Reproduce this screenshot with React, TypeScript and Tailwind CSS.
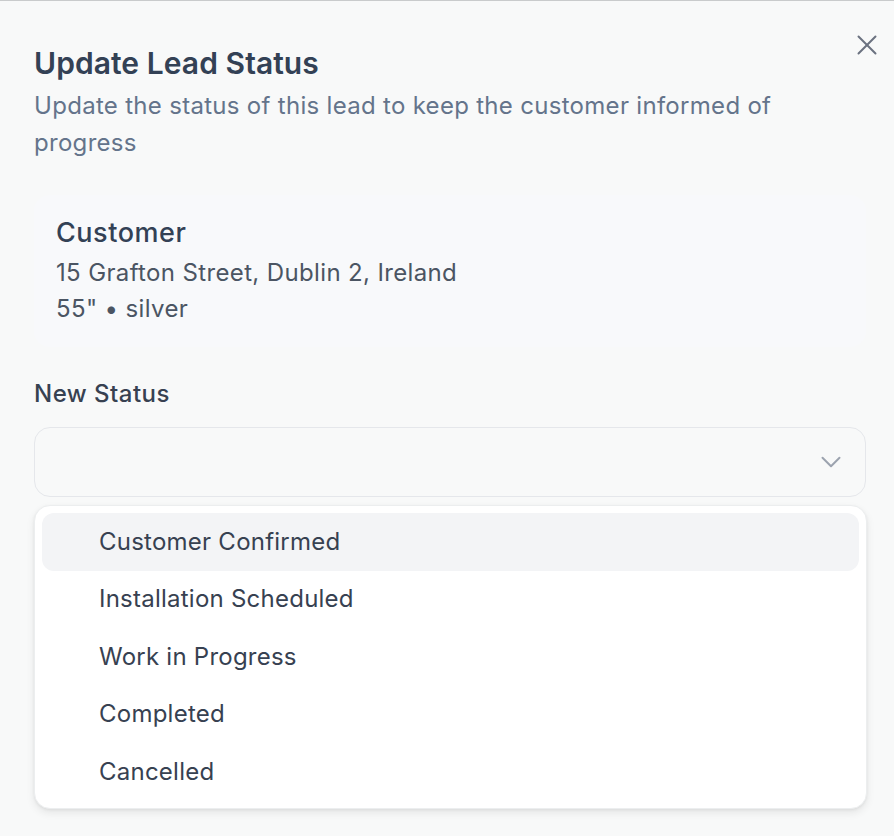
import React from "react";
import { X, ChevronDown } from "lucide-react";

const items = [
  "Customer Confirmed",
  "Installation Scheduled",
  "Work in Progress",
  "Completed",
  "Cancelled",
];

export default function App() {
  return (
    <div
      className="relative min-h-[836px] w-full bg-[#f8f9f9] border-t border-[#c9cbcc] pl-[34px] pr-[28px] pt-[44px] text-[#334155]"
      style={{ fontFamily: "Inter, 'Noto Sans', sans-serif" }}
    >
      <button className="absolute right-[10px] top-[27px] text-[#6b7280]">
        <X size={34} strokeWidth={1.4} />
      </button>

      <h2 className="text-[30px] leading-[36px] font-semibold tracking-[0.002em] text-[#334155]">
        Update Lead Status
      </h2>
      <p className="mt-[6px] text-[24px] leading-[37px] tracking-[0.0125em] text-[#64748b] pr-[30px]">
        Update the status of this lead to keep the customer informed of progress
      </p>

      <div className="mt-[34px] rounded-2xl bg-[#f8f9fb] px-[22px] py-[20px]">
        <div className="text-[27px] leading-[36px] font-medium tracking-[0.02em] text-[#334155]">Customer</div>
        <div className="mt-[4px] text-[24px] leading-[36px] tracking-[0.015em] text-[#4b5563]">
          15 Grafton Street, Dublin 2, Ireland
        </div>
        <div className="text-[24px] leading-[36px] tracking-[0.015em] text-[#4b5563]">55" • silver</div>
      </div>

      <div className="mt-[32px] text-[24px] leading-[30px] font-medium tracking-[0.02em] text-[#374151]">New Status</div>

      <div className="relative mt-[18px]">
        <div className="flex h-[70px] items-center justify-end rounded-2xl border border-[#e5e7eb] bg-[#f8f9f9] pr-[17px]">
          <ChevronDown size={34} strokeWidth={1.4} className="text-[#9ca3af]" />
        </div>

        <div className="absolute left-0 right-[-1px] top-full mt-[8px] rounded-2xl border border-[#eceeef] bg-white p-[7px] shadow-[0_4px_8px_rgba(0,0,0,0.08),0_1px_3px_rgba(0,0,0,0.06)]">
          {items.map((it, i) => (
            <div
              key={it}
              className={
                "flex h-[57.5px] items-center rounded-xl pl-[57px] text-[24px] tracking-[0.01em] text-[#374151] " +
                (i === 0 ? "bg-[#f3f4f6]" : "")
              }
            >
              {it}
            </div>
          ))}
        </div>
      </div>
    </div>
  );
}
